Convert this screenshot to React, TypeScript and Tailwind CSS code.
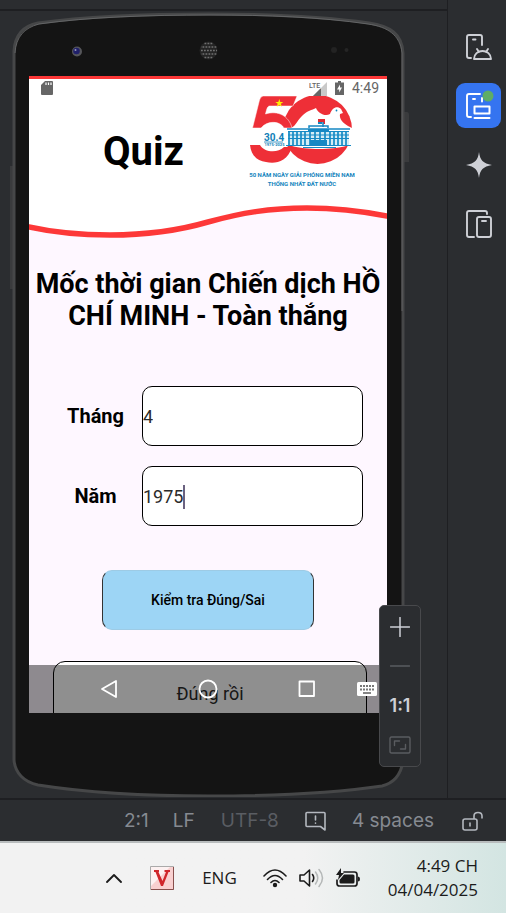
import type { ReactNode } from "react";

const stroke = { fill: "none", stroke: "currentColor", strokeLinecap: "round", strokeLinejoin: "round" } as const;

function AnniversaryLogo() {
  const columns = [39, 43, 47, 51, 55, 60, 65, 70, 75, 80, 84, 88, 92, 96];
  return (
    <svg viewBox="0 0 104 70" className="h-[70px] w-[104px]" aria-hidden="true">
      <circle cx="67.5" cy="33.5" r="34.5" fill="#ee2f37" />
      <path d="M41 32C46 30 48 23 53 19C57 15 62 14 66 12C68 17 75 21 80 18C82 12 87 9 91 13L93 17L90 18C89 23 93 27 98 30L102 32V50H96C82 54 56 54 42 50H30V31Z" fill="#fff" />
      <path d="M13 0H47L43 10H20C17.500 10 17 12 15.500 18C28 14 39 20 42 32H34C30 25 18 24 11 32H2.500L9.500 4Q10.500 0.500 13 0Z" fill="#ee2f37" stroke="#fff" strokeWidth="0.500" />
      <path d="M0 49H10C14 56 27 58 34 51H42C37 67 24 68 16 66C7 65 1 59 0 49Z" fill="#ee2f37" />
      <path d="M29.300 3L30.300 6H33.300L30.900 7.800L31.800 10.700L29.300 9L26.800 10.700L27.700 7.800L25.300 6H28.300Z" fill="#ffef00" />
      <circle cx="86.500" cy="14.500" r="0.900" fill="#0b82bd" />
      <path d="M68 23H75V28H73V26H68Z" fill="#e22b32" />
      <path d="M68 26H72V28H68Z" fill="#1787be" />
      <path d="M73 26V31M37 33H100M59 32V30H78V32" stroke="#1688c4" strokeWidth="1.500" fill="none" />
      <path d="M38 35H99V49H38Z" fill="#d5edf6" />
      <path d="M38 35.500H99M38 39H99M38 42.500H99M36 49.500H101M53 51.500H86" stroke="#1688c4" strokeWidth="1.200" />
      {columns.map((x) => (
        <path key={x} d={`M${x} 35V49`} stroke="#168bc5" strokeWidth="1.700" />
      ))}
      <path d="M58 33H79V36H58ZM60 44H77V49H60Z" fill="#1688c4" />
      <text x="14" y="44.500" fontFamily="Liberation Sans Narrow, Roboto, sans-serif" fontWeight="700" fontSize="10" fill="#117fb8">30.4</text>
      <path d="M14 46H33" stroke="#117fb8" strokeWidth="0.800" />
      <text x="14.500" y="50" fontFamily="Roboto, sans-serif" fontWeight="700" fontSize="4" fill="#117fb8">1975-2025</text>
    </svg>
  );
}

function StatusIcons() {
  return (
    <div className="absolute inset-x-0 top-0 flex h-6 items-center px-2 text-[#666]">
      <svg viewBox="0 0 12 14" className="ml-1 h-[14px] w-3" aria-label="Storage">
        <path d="M4 0H11Q12 0 12 1V13Q12 14 11 14H1Q0 14 0 13V4Z" fill="#666" />
        <path d="M5 1.500V4M7.500 1.500V4M10 1.500V4" stroke="#fff" strokeWidth="1.200" />
      </svg>
      <svg viewBox="0 0 19 15" className="ml-auto h-[15px] w-[19px]" aria-label="LTE signal">
        <path d="M18 1V15H4Z" fill="#c9c9c9" />
        <path d="M12 7V15H4Z" fill="#666" />
        <text x="0" y="6.500" fontFamily="Liberation Sans Narrow, Roboto, sans-serif" fontSize="7" fontWeight="500" fill="#666" stroke="#fff" strokeWidth="1" paintOrder="stroke">LTE</text>
      </svg>
      <svg viewBox="0 0 9 14" className="ml-[7px] h-[14px] w-[9px]" aria-label="Charging">
        <path d="M3 0H6V1.500H9V14H0V1.500H3Z" fill="#666" />
        <path d="M5 3.500L2 8.500H4.200V11.500L7 6.500H5Z" fill="#fff" />
      </svg>
      <span className="ml-2 text-[14px] leading-4">4:49</span>
    </div>
  );
}

function NavBar() {
  const button = "flex h-12 w-[60px] items-center justify-center";
  return (
    <nav className="absolute inset-x-0 bottom-0 flex h-12 items-center bg-black/44 pl-[50px] text-white">
      <button className={button} aria-label="Back">
        <svg viewBox="0 0 18 20" className="h-5 w-[18px]"><path d="M16 2V18L2 10Z" {...stroke} strokeWidth="1.800" /></svg>
      </button>
      <button className={`${button} ml-[39px]`} aria-label="Home">
        <svg viewBox="0 0 20 20" className="size-5"><circle cx="10" cy="10" r="8.500" {...stroke} strokeWidth="1.800" /></svg>
      </button>
      <button className={`${button} ml-[39px]`} aria-label="Recent apps">
        <svg viewBox="0 0 18 18" className="size-[18px]"><path d="M1.500 1.500H16V16H1.500Z" {...stroke} strokeWidth="1.800" /></svg>
      </button>
      <button className="ml-5 flex h-12 w-[22px] items-center" aria-label="Keyboard">
        <svg viewBox="0 0 20 14" className="h-[14px] w-5">
          <rect width="20" height="14" rx="1.500" fill="#fff" />
          <path d="M3 4H17M3 7.500H17" stroke="#777" strokeWidth="1.800" strokeDasharray="2 1" />
          <path d="M6 11H14" stroke="#777" strokeWidth="1.800" />
        </svg>
      </button>
    </nav>
  );
}

function Field({ id, label, value, caret }: { id: string; label: string; value: string; caret?: boolean }) {
  return (
    <div className="flex items-center">
      <label htmlFor={id} className="w-[113px] shrink-0 pl-5 text-center text-[20px] leading-6 font-bold text-black">
        {label}
      </label>
      <div className="flex h-[60px] flex-1 items-center rounded-[10px] border border-black bg-white pt-px">
        <input
          id={id}
          defaultValue={value}
          inputMode="numeric"
          className="field-sizing-content text-[18px] leading-6 text-[#2b2b2b] outline-none"
        />
        {caret && <span className="h-6 w-0.5 bg-[#6b6280]" />}
      </div>
    </div>
  );
}

function QuizScreen() {
  return (
    <main className="relative h-[637px] overflow-hidden bg-[#fef7ff] font-[Roboto,sans-serif]">
      <header className="relative h-[168px] border-t-[3px] border-[#fd3838]">
        <svg viewBox="0 3 358 165" preserveAspectRatio="none" className="absolute inset-0 h-full w-full" aria-hidden="true">
          <path d="M0 0H358V140C332 135 306 132 278 132C240 132 212 137 179 146C148 155 115 159 81 159C54 159 27 157 0 151Z" fill="#fff" />
          <path d="M-5 150L0 151C27 157 54 159 81 159C115 159 148 155 179 146C212 137 240 132 278 132C306 132 332 135 358 140L363 141" fill="none" stroke="#fd3838" strokeWidth="5.500" />
        </svg>
        <div className="relative flex items-start justify-between pt-[17px] pr-[33px] pl-[74px]">
          <h1 className="pt-8 text-[40px] leading-[48px] font-bold text-black">Quiz</h1>
          <figure className="flex w-[104px] flex-col items-center">
            <AnniversaryLogo />
            <figcaption className="mt-1 text-center font-['Liberation_Sans_Narrow',Roboto,sans-serif] text-[6px] leading-[9px] font-bold whitespace-nowrap text-[#1484bd]">
              50 NĂM NGÀY GIẢI PHÓNG MIỀN NAM
              <br />
              THỐNG NHẤT ĐẤT NƯỚC
            </figcaption>
          </figure>
        </div>
      </header>
      <h2 className="px-1 pt-6 text-center text-[27px] leading-8 font-bold text-black">
        Mốc thời gian Chiến dịch HỒ CHÍ MINH - Toàn thắng
      </h2>
      <form className="pt-[54px]" onSubmit={(e) => e.preventDefault()}>
        <div className="flex flex-col gap-5 pr-6">
          <Field id="month" label="Tháng" value="4" />
          <Field id="year" label="Năm" value="1975" caret />
        </div>
        <button className="mx-auto mt-11 block h-[60px] w-[212px] rounded-[10px] border border-x-[#333] border-y-[#9dcbe5] bg-[#9dd5f5] text-[14px] leading-5 font-medium text-black">
          Kiểm tra Đúng/Sai
        </button>
        <output className="mx-6 mt-[31px] mr-5 block h-[68px] rounded-[12px] border border-black bg-white pt-5 text-center text-[18px] leading-6 text-[#2b2b2b]">
          Đúng rồi
        </output>
      </form>
      <StatusIcons />
      <NavBar />
    </main>
  );
}

function DeviceFrame({ children }: { children: ReactNode }) {
  return (
    <div className="relative mr-[38px] ml-[9px] pt-[65px] pr-[22px] pb-[84px] pl-5">
      <svg viewBox="0 0 400 786" preserveAspectRatio="none" className="absolute inset-0 h-full w-full" aria-hidden="true">
        <path d="M1 155H5V278H1ZM395 101H398Q400 101 400 104V151H395Z" fill="#3a3b3d" />
        <path
          d="M5 40C6 24 14 15 29 12C80 5 140 3 200 3C260 3 310 5 360 12C381 15 393 23 394 42V750C392 764 385 772 373 775C320 783 260 785 200 785C140 785 80 782 29 774C15 771 6 762 5 749Z"
          fill="#141414"
          stroke="#464748"
          strokeWidth="3"
        />
        <path
          d="M6 42C7 26 15 17 30 13C80 6 140 4 200 4C260 4 310 6 359 13C379 16 391 24 393 42V300"
          fill="none"
          stroke="#6c6d6e"
          strokeWidth="0.800"
        />
        <circle cx="68" cy="40.500" r="5" fill="#55565a" />
        <circle cx="67.500" cy="40" r="3.300" fill="#20206a" />
        <circle cx="66.500" cy="39" r="1" fill="#9a9ab8" />
        <circle cx="199.500" cy="39.500" r="9" fill="#242424" />
        {[32.5, 36, 39.5, 43, 46.5].map((y, i) => (
          <path key={y} d={i % 4 === 0 ? `M195.500 ${y}H204` : `M192 ${y}H208`} stroke="#707070" strokeWidth="1.600" strokeDasharray="1.800 1.200" strokeDashoffset={i % 2 ? 1.5 : 0} />
        ))}
        <circle cx="325" cy="39" r="3" fill="#232323" />
        <circle cx="337.500" cy="39" r="2" fill="#252525" />
      </svg>
      <div className="relative">{children}</div>
    </div>
  );
}

function ZoomControls() {
  const button = "flex h-8 w-full items-center justify-center";
  return (
    <div className="absolute right-[26px] bottom-[31px] flex h-[162px] w-[42px] flex-col items-center justify-between rounded-[5px] border border-[#48494c] bg-[#2b2d30] pt-[5px] pb-[5px] text-[#ced0d6]">
      <button className={button} aria-label="Zoom in">
        <svg viewBox="0 0 20 20" className="size-5"><path d="M10 0.500V19.500M0.500 10H19.500" {...stroke} strokeWidth="1.500" /></svg>
      </button>
      <button className={`${button} text-[#5a5c60]`} aria-label="Zoom out">
        <svg viewBox="0 0 20 20" className="size-5"><path d="M0.500 10H19.500" {...stroke} strokeWidth="1.500" /></svg>
      </button>
      <button className={`${button} text-[18px] leading-5 font-semibold`}>1:1</button>
      <button className={`${button} text-[#5a5c60]`} aria-label="Zoom to fit">
        <svg viewBox="0 0 22 18" className="h-[18px] w-[22px]">
          <path d="M2.500 1H19.500Q21 1 21 2.500V15.500Q21 17 19.500 17H2.500Q1 17 1 15.500V2.500Q1 1 2.500 1ZM5.500 9.500V5H10.500M11.500 13H16.500V8.500" {...stroke} strokeWidth="1.400" />
        </svg>
      </button>
    </div>
  );
}

function ToolStrip() {
  const button = "flex size-[45px] items-center justify-center rounded-[9px]";
  return (
    <aside className="flex w-[59px] shrink-0 flex-col items-center gap-[14px] border-l border-[#1e1f22] pt-6 pl-[3px] text-[#ced0d6]">
      <button className={button} aria-label="Device manager">
        <svg viewBox="0 0 28 28" className="size-7">
          <path d="M6 25H4Q2 25 2 23V4Q2 2 4 2H15Q17 2 17 4V12M8 6.500H10.500" {...stroke} strokeWidth="1.900" />
          <path d="M9 26C9 21 13 18 17.500 18S26 21 26 26ZM12 16L14 19M23 16L21 19" {...stroke} strokeWidth="1.900" />
        </svg>
      </button>
      <button className={`${button} bg-[#3574f0] text-white`} aria-label="Running devices">
        <svg viewBox="0 0 28 28" className="size-7 overflow-visible">
          <path d="M6 25H4Q2 25 2 23V4Q2 2 4 2H15M17 6V9.500M8 7H10" {...stroke} strokeWidth="1.900" />
          <path d="M9.500 14.500H24.500V21.500H9.500ZM9.500 26H24.500" {...stroke} strokeWidth="2" />
          <circle cx="23" cy="4" r="5.500" fill="#5fad65" />
        </svg>
      </button>
      <button className={button} aria-label="Gemini">
        <svg viewBox="0 0 28 28" className="size-7"><path d="M14 1C15 9 18 12.500 27 14C18 15.500 15 19 14 27C13 19 10 15.500 1 14C10 12.500 13 9 14 1Z" fill="currentColor" /></svg>
      </button>
      <button className={button} aria-label="Device explorer">
        <svg viewBox="0 0 28 28" className="size-7">
          <path d="M9 27H4Q2 27 2 25V3Q2 1 4 1H20Q22 1 22 3V4M14 7H24Q26 7 26 9V25Q26 27 24 27H14Q12 27 12 25V9Q12 7 14 7ZM17 11H21" {...stroke} strokeWidth="1.900" />
        </svg>
      </button>
    </aside>
  );
}

function IdeStatusBar() {
  return (
    <footer className="flex h-[43px] items-center justify-end border-t-2 border-[#1e1f22] pr-[23px] text-[19px] leading-6 whitespace-nowrap text-[#868a91]">
      <span>2:1</span>
      <span className="ml-6">LF</span>
      <span className="ml-[26px] text-[#5a5d63]">UTF-8</span>
      <svg viewBox="0 0 21 20" className="ml-[26px] h-5 w-[21px] text-[#b4b8bf]" aria-label="Problems">
        <path d="M2 1.500H19Q20 1.500 20 2.500V19L15.500 15.500H2Q1 15.500 1 14.500V2.500Q1 1.500 2 1.500ZM10.500 5V9M10.500 12V12.200" {...stroke} strokeWidth="1.600" />
      </svg>
      <span className="ml-[26px]">4 spaces</span>
      <svg viewBox="0 0 21 20" className="ml-7 h-5 w-[21px] text-[#b4b8bf]" aria-label="Writable">
        <path d="M3 8H13Q15 8 15 10V17Q15 19 13 19H3Q1 19 1 17V10Q1 8 3 8ZM8 12V15M12 8V5Q12 1.500 16 1.500T20 5V7" {...stroke} strokeWidth="1.600" />
      </svg>
    </footer>
  );
}

function Taskbar() {
  return (
    <footer className="flex h-[72px] items-center justify-end border-t-2 border-[#b8bcbd] bg-linear-to-r from-[#f2f2f2] from-60% to-[#d3e5e2] pr-7 font-['Open_Sans','Noto_Sans',sans-serif] text-[17px] text-[#1b1b1b]">
      <button aria-label="Show hidden icons">
        <svg viewBox="0 0 18 10" className="h-[10px] w-[18px]"><path d="M2 9L9 2L16 9" {...stroke} strokeWidth="1.800" /></svg>
      </button>
      <button aria-label="Unikey" className="ml-[27px]">
        <svg viewBox="0 0 24 24" className="size-6">
          <path d="M0.500 0.500H23.500V23.500H0.500Z" fill="#f9d0d0" stroke="#aaa" />
          <path d="M1 23.500H23.500V1" fill="none" stroke="#874f4c" />
          <path d="M1 1H20L1 20Z" fill="#fdf1f1" />
          <path d="M4 4H9V6H8.500L12.500 15L16 6H14.500V4H20V6H18.500L13 20H11L5.500 6H4Z" fill="#d0262b" />
        </svg>
      </button>
      <span className="ml-7">ENG</span>
      <svg viewBox="0 0 24 20" className="ml-[26px] h-5 w-6" aria-label="Wi-Fi">
        <path d="M1 8Q12 -4 23 8M4.500 11.500Q12 3.500 19.500 11.500M8 14.500Q12 10.500 16 14.500" {...stroke} strokeWidth="1.600" />
        <circle cx="12" cy="17" r="2.200" fill="currentColor" />
      </svg>
      <svg viewBox="0 0 25 20" className="ml-3 h-5 w-[25px]" aria-label="Volume">
        <path d="M1 7V13H5L10.500 18V2L5 7Z" {...stroke} strokeWidth="1.600" />
        <path d="M13.500 6.500Q16 10 13.500 13.500" {...stroke} strokeWidth="1.600" />
        <path d="M16.500 4Q21 10 16.500 16M20 1.500Q27 10 20 18.500" {...stroke} stroke="#b5b8b8" strokeWidth="1.500" />
      </svg>
      <svg viewBox="0 0 24 20" className="ml-3 h-5 w-6" aria-label="Battery charging">
        <path d="M8 4H18.500Q21 4 21 6.500V15.500Q21 18 18.500 18H3.500Q1 18 1 15.500V12" {...stroke} strokeWidth="1.700" />
        <path d="M8 6.500H17Q18.500 6.500 18.500 8V14Q18.500 15.500 17 15.500H5Q3.500 15.500 3.500 14V12L6 9Z" fill="currentColor" />
        <path d="M22 8.500Q24 8.500 24 11T22 13.500ZM5 0L0 7H3L2 12L8 5H5Z" fill="currentColor" />
      </svg>
      <time className="ml-7 text-right leading-6">
        4:49 CH
        <br />
        04/04/2025
      </time>
    </footer>
  );
}

export default function App() {
  return (
    <div className="flex min-h-screen flex-col bg-[#2b2d30] font-[Inter,sans-serif]">
      <div className="flex flex-1">
        <section className="relative flex-1">
          <div className="h-[11px] border-b-2 border-[#1e1f22]" />
          <DeviceFrame>
            <QuizScreen />
          </DeviceFrame>
          <ZoomControls />
        </section>
        <ToolStrip />
      </div>
      <IdeStatusBar />
      <Taskbar />
    </div>
  );
}
